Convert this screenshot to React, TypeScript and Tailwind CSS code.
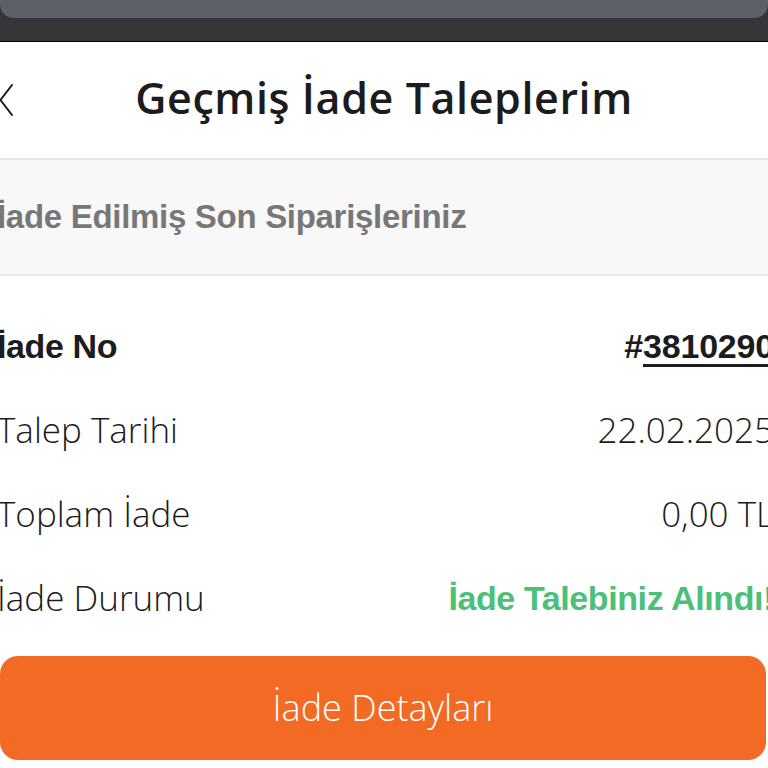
const avenir = { fontFamily: '"Open Sans", Lato, sans-serif' };

function Row({ label, value, bold }: { label: string; value: React.ReactNode; bold?: boolean }) {
  return (
    <div className="flex h-[84px] items-center justify-between">
      <span
        className={
          bold
            ? 'font-[Liberation_Sans] text-[34px] font-bold tracking-[-0.4px] text-[#1c1c1e]'
            : 'text-[35px] font-light text-[#1c1c1e]'
        }
      >
        {label}
      </span>
      {value}
    </div>
  );
}

export default function App() {
  return (
    <main className="h-[768px] w-[768px] overflow-hidden bg-white" style={avenir}>
      <div className="h-[42px] border-b border-black bg-[#363638]">
        <div className="h-[18px] rounded-b-[14px] bg-[#5d6068]" />
      </div>
      <header className="relative flex h-[116px] items-center justify-center">
        <svg className="absolute left-[-1px] top-[42px]" width="14" height="32" viewBox="0 0 14 32" fill="none">
          <polyline points="13,1 1.5,16 13,31" stroke="#1c1c1e" strokeWidth="2" strokeLinecap="round" strokeLinejoin="round" />
        </svg>
        <h1 className="-mt-[4px] text-[43px] font-semibold tracking-[0.6px] text-[#1c1c1e]">Geçmiş İade Taleplerim</h1>
      </header>
      <section className="flex h-[118px] items-center border-y-2 border-[#e8e8e8] bg-[#f8f8f8]">
        <h2 className="-ml-[3px] font-[Liberation_Sans] text-[33px] font-bold tracking-[-0.3px] text-[#777777]">
          İade Edilmiş Son Siparişleriniz
        </h2>
      </section>
      <div className="-ml-[3px] -mr-[6px] pt-[28px]">
        <Row
          bold
          label="İade No"
          value={
            <span className="font-[Liberation_Sans] text-[34px] font-bold tracking-[-0.2px] text-[#1c1c1e]">
              #<span className="underline decoration-[3px] underline-offset-[6px]">3810290</span>
            </span>
          }
        />
        <Row label="Talep Tarihi" value={<span className="text-[35px] font-light text-[#1c1c1e]">22.02.2025</span>} />
        <Row label="Toplam İade" value={<span className="text-[35px] font-light text-[#1c1c1e]">0,00 TL</span>} />
        <Row
          label="İade Durumu"
          value={
            <span className="font-[Liberation_Sans] text-[34px] font-bold tracking-[-0.4px] text-[#4cbf78]">İade Talebiniz Alındı!</span>
          }
        />
      </div>
      <div className="pr-[2px] pt-[16px]">
        <button className="flex h-[104px] w-full items-center justify-center rounded-[18px] bg-[#f26a23] text-[36px] font-light text-white">
          İade Detayları
        </button>
      </div>
    </main>
  );
}
